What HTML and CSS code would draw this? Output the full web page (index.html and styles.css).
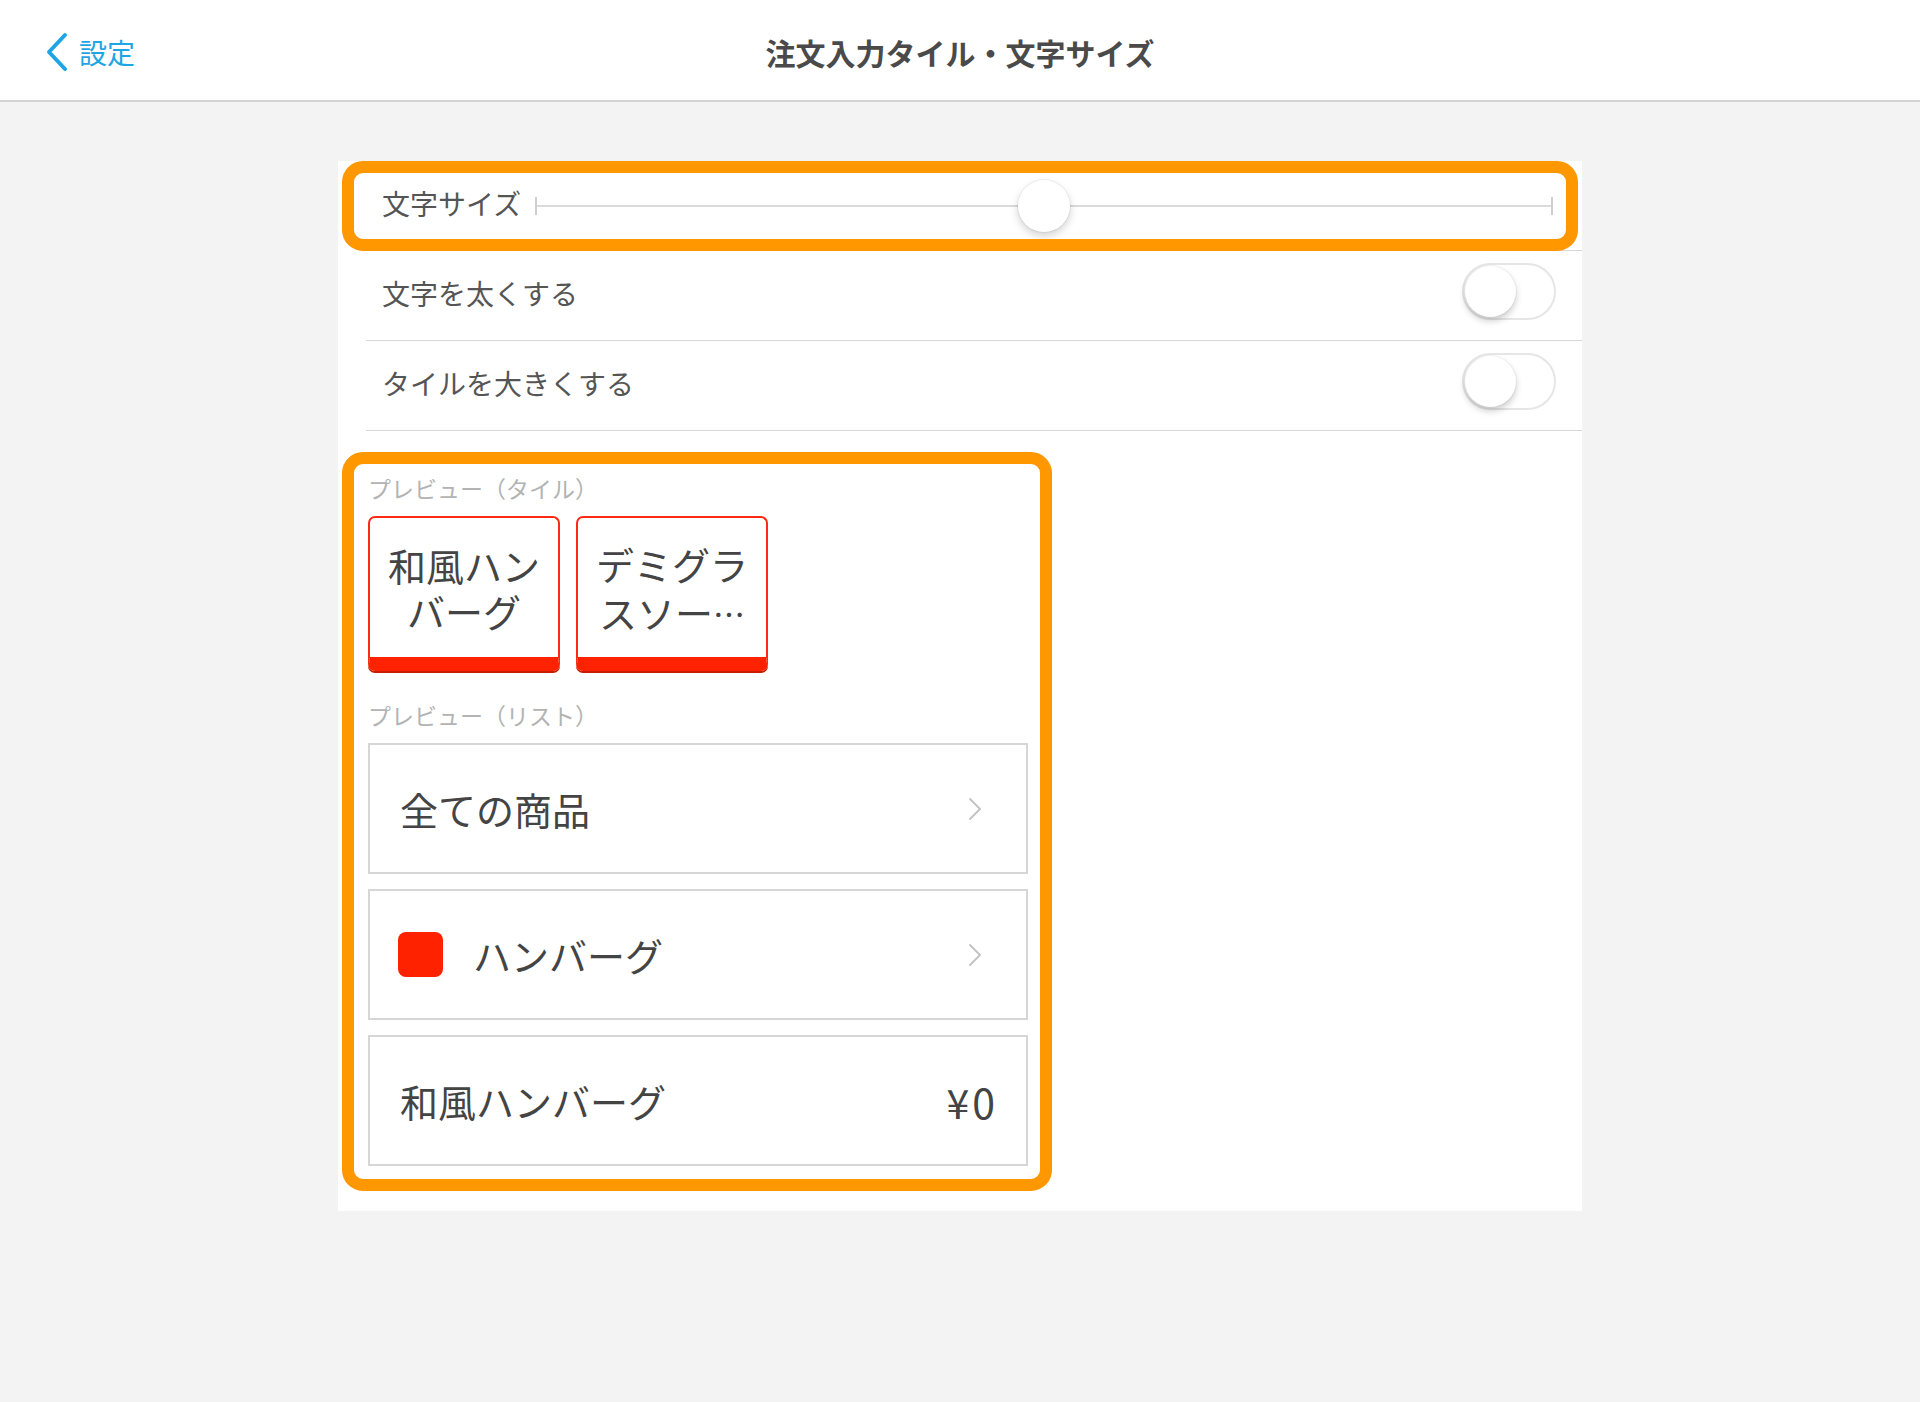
FILE: index.html
```html
<!DOCTYPE html>
<html lang="ja">
<head>
<meta charset="utf-8">
<title>注文入力タイル・文字サイズ</title>
<link rel="stylesheet" href="styles.css">
</head>
<body>
<header class="nav">
  <div class="nav-left">
    <a class="back" href="#">
      <svg class="back-icon" viewBox="0 0 24 40" width="24" height="40" aria-hidden="true"><path d="M20 3 L4 20 L20 37" fill="none" stroke="#1ea5e3" stroke-width="4" stroke-linecap="round" stroke-linejoin="round"/></svg>
      <span class="back-text">設定</span>
    </a>
  </div>
  <h1 class="title">注文入力タイル・文字サイズ</h1>
  <div class="nav-right"></div>
</header>
<main class="page">
  <section class="card">
    <div class="row slider-row highlight">
      <span class="label">文字サイズ</span>
      <div class="slider">
        <span class="tick"></span>
        <span class="track"></span>
        <span class="tick"></span>
        <span class="thumb" style="left:50%"></span>
      </div>
    </div>
    <div class="row">
      <span class="label">文字を太くする</span>
      <span class="switch"><span class="knob"></span></span>
    </div>
    <div class="row">
      <span class="label">タイルを大きくする</span>
      <span class="switch"><span class="knob"></span></span>
    </div>
    <div class="preview">
      <div class="caption">プレビュー（タイル）</div>
      <div class="tiles">
        <div class="tile"><span>和風ハン</span><span>バーグ</span></div>
        <div class="tile"><span>デミグラ</span><span>スソー<span class="ell">…</span></span></div>
      </div>
      <div class="caption caption-list">プレビュー（リスト）</div>
      <div class="list">
        <div class="item">
          <span class="item-text">全ての商品</span>
          <svg class="chev" viewBox="0 0 14 24" width="14" height="24" aria-hidden="true"><path d="M2 2 L12 12 L2 22" fill="none" stroke="#c4c4c4" stroke-width="2" stroke-linecap="round" stroke-linejoin="round"/></svg>
        </div>
        <div class="item">
          <span class="swatch"></span>
          <span class="item-text">ハンバーグ</span>
          <svg class="chev" viewBox="0 0 14 24" width="14" height="24" aria-hidden="true"><path d="M2 2 L12 12 L2 22" fill="none" stroke="#c4c4c4" stroke-width="2" stroke-linecap="round" stroke-linejoin="round"/></svg>
        </div>
        <div class="item">
          <span class="item-text">和風ハンバーグ</span>
          <span class="price">¥0</span>
        </div>
      </div>
    </div>
  </section>
</main>
</body>
</html>
```

FILE: styles.css
```css
* { box-sizing: border-box; }

html, body {
  margin: 0;
  padding: 0;
}

body {
  background: #f3f3f3;
  min-height: 1402px;
  font-family: "Noto Sans CJK JP", "Noto Sans", sans-serif;
  color: #4a4a4a;
}

/* ---------- navigation bar ---------- */
.nav {
  height: 102px;
  padding-top: 8px;
  background: #fff;
  border-bottom: 2px solid #d3d3d3;
  display: grid;
  grid-template-columns: 1fr auto 1fr;
  align-items: center;
}

.nav-left {
  padding-left: 45px;
}

.back {
  display: inline-flex;
  align-items: center;
  text-decoration: none;
  color: #1ea5e3;
}

.back-icon {
  display: block;
}

.back-text {
  margin-left: 10px;
  font-size: 28px;
  line-height: 40px;
  color: #1ea5e3;
}

.title {
  margin: 0;
  padding-bottom: 5px;
  font-size: 30px;
  font-weight: 700;
  line-height: 40px;
  color: #4a4a4a;
  letter-spacing: 0;
}

/* ---------- card ---------- */
.page {
  padding-top: 59px;
}

.card {
  width: 1244px;
  margin: 0 auto;
  background: #fff;
  padding-bottom: 20px;
}

.row {
  height: 90px;
  margin-left: 28px;
  padding-left: 16px;
  padding-right: 26px;
  display: flex;
  align-items: center;
  justify-content: space-between;
  border-bottom: 1px solid #d8d8d8;
}

.label {
  padding-bottom: 5px;
  font-size: 28px;
  line-height: 40px;
  color: #555;
  white-space: nowrap;
}

/* slider row */
.slider-row {
  padding-right: 29px;
}

.highlight {
  position: relative;
}

.highlight::after {
  content: "";
  position: absolute;
  left: -24px;
  right: 4px;
  top: 0;
  bottom: -1px;
  border: 12px solid #ff9800;
  border-radius: 21px;
  pointer-events: none;
}

.slider {
  flex: 1;
  margin-left: 14px;
  height: 52px;
  display: flex;
  align-items: center;
  position: relative;
}

.tick {
  width: 2px;
  height: 18px;
  background: #cfcfcf;
}

.track {
  flex: 1;
  height: 2px;
  background: #dadada;
}

.thumb {
  position: absolute;
  top: 0;
  width: 52px;
  height: 52px;
  margin-left: -26px;
  border-radius: 50%;
  background: #fff;
  box-shadow: 0 4px 8px rgba(0, 0, 0, 0.18), 0 0 0 1px rgba(0, 0, 0, 0.05);
}

/* switches */
.switch {
  width: 94px;
  height: 57px;
  margin-bottom: 8px;
  padding: 1px;
  border: 2px solid #e6e6e6;
  border-radius: 29px;
  background: #fff;
  display: flex;
  align-items: center;
}

.knob {
  width: 51px;
  height: 51px;
  border-radius: 50%;
  background: #fff;
  box-shadow: 0 4px 7px rgba(0, 0, 0, 0.2), 0 0 0 1px rgba(0, 0, 0, 0.04);
}

/* ---------- preview ---------- */
.preview {
  width: 710px;
  margin: 21px 0 0 4px;
  border: 12px solid #ff9800;
  border-radius: 21px;
  padding: 9px 12px 13px 14px;
}

.caption {
  font-size: 23px;
  line-height: 30px;
  color: #b3b3b3;
}

.caption-list {
  margin-top: 27px;
}

.tiles {
  margin-top: 13px;
  display: flex;
  gap: 16px;
}

.tile {
  width: 192px;
  height: 155px;
  margin-bottom: 2px;
  border: 2px solid #ff2a14;
  border-bottom: 14px solid #ff2200;
  border-radius: 7px;
  box-shadow: 0 2px 0 #c81c00;
  display: flex;
  flex-direction: column;
  align-items: center;
  justify-content: center;
  padding-top: 6px;
  font-family: "Liberation Sans", "Noto Sans CJK JP", sans-serif;
  font-size: 38px;
  line-height: 46px;
  color: #444;
  text-align: center;
}

.ell {
  font-family: "Noto Sans CJK JP", sans-serif;
  font-size: 32px;
  vertical-align: 1px;
  letter-spacing: 0;
}

.list {
  margin-top: 13px;
  display: flex;
  flex-direction: column;
  gap: 15px;
}

.item {
  height: 131px;
  border: 2px solid #d6d6d6;
  display: flex;
  align-items: center;
  padding: 0 31px 0 30px;
}

.item-text {
  flex: 1;
  font-size: 38px;
  line-height: 50px;
  color: #444;
}

.swatch {
  width: 45px;
  height: 45px;
  margin-left: -2px;
  margin-right: 30px;
  border-radius: 8px;
  background: #ff2200;
}

.chev {
  display: block;
  margin-right: 13px;
}

.price {
  margin-right: -3px;
  font-size: 41px;
  line-height: 50px;
  letter-spacing: 3px;
  color: #444;
}
```
